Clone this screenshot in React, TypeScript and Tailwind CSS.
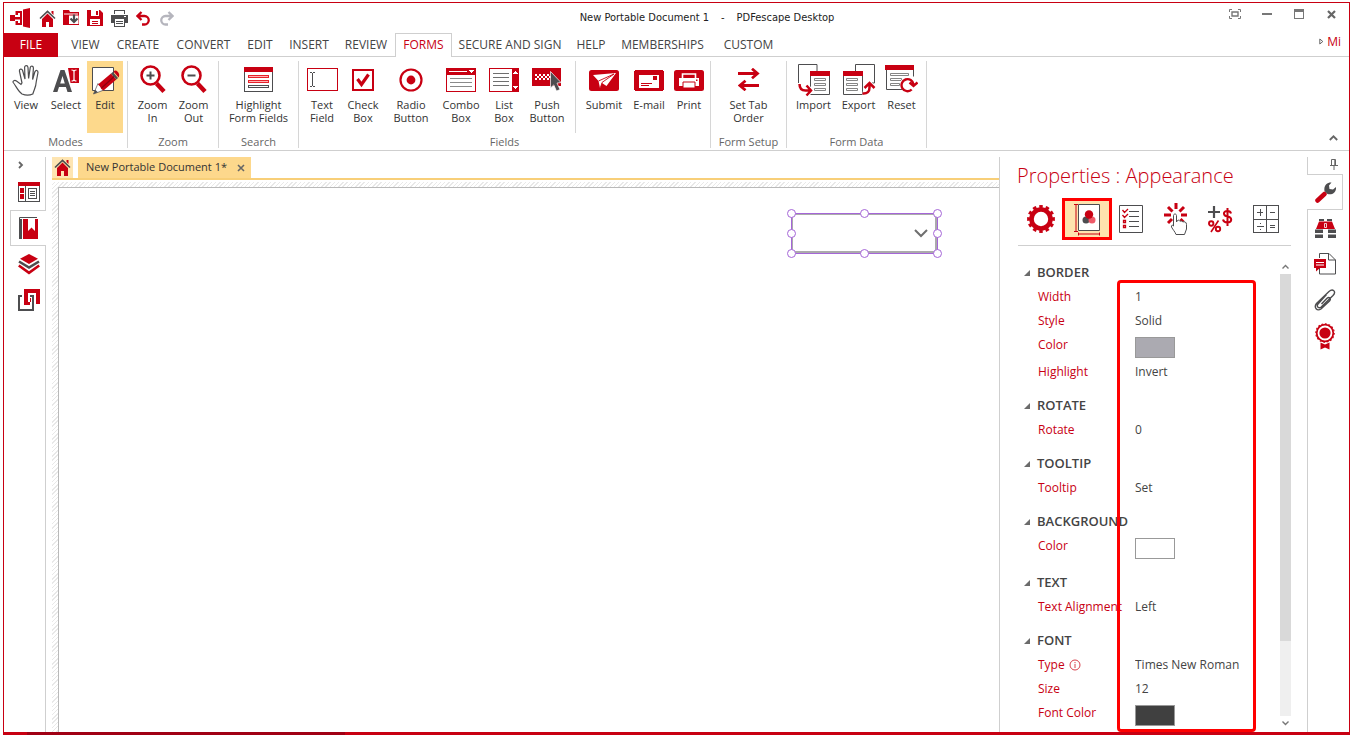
import React from "react";

const RED = "#c80012";
const DARK = "#4d4d4f";

type IconProps = { w: number; h: number; children: React.ReactNode; crisp?: boolean };

function Icon({ w, h, children, crisp }: IconProps) {
  return (
    <svg
      width={w}
      height={h}
      viewBox={`0 0 ${w} ${h}`}
      fill="none"
      aria-hidden="true"
      className="shrink-0"
      shapeRendering={crisp ? "crispEdges" : "auto"}
    >
      {children}
    </svg>
  );
}

/* ---------- title bar icons ---------- */

const ExitIcon = () => (
  <Icon w={21} h={20}>
    <path d="M13 1.500L20 0v20l-7-1.500z" fill={RED} />
    <path d="M0 7h5v6H0zM4 9h6v2.500H4z" fill={RED} />
    <path d="M5.500 3H12v14H5.500v-4H8v2h2V5H8v2H5.500z" fill={RED} />
  </Icon>
);

const HomeIcon = () => (
  <Icon w={17} h={17}>
    <path d="M3 9l5.500-5.500L14 9v8h-4v-5H7v5H3z" fill={RED} />
    <path d="M1 8.500l7.500-7.200L16 8.500" stroke={DARK} strokeWidth="1.600" />
    <path d="M12.500 1h2v4l-2-2z" fill={RED} />
  </Icon>
);

const FolderDownIcon = () => (
  <Icon w={17} h={16}>
    <path d="M0 0h6l1 2h9v13H0z" fill={RED} />
    <path d="M1 4h14" stroke="#fff" strokeWidth="1" />
    <path d="M6 5.500h9.500V14H6z" fill="#fff" />
    <path d="M11 4.500v7M7.500 8.500L11 12l3.500-3.500" stroke={DARK} strokeWidth="2.200" />
  </Icon>
);

const SaveIcon = () => (
  <Icon w={16} h={16}>
    <path d="M0 0h13l3 3v13H0z" fill={RED} />
    <path d="M4 0h8v6H4zM3 9h10v6H3z" fill="#fff" />
    <path d="M9 1h2v4H9zM5 11h6v1H5zM5 13h6v1H5z" fill={RED} />
  </Icon>
);

const PrinterIcon = () => (
  <Icon w={17} h={17} crisp>
    <path d="M3 0h11v4H3z" fill={DARK} />
    <path d="M4 1h9v3H4z" fill="#fff" />
    <path d="M0 5h17v8H0z" fill={DARK} />
    <path d="M3 9h11v8H3z" fill={DARK} />
    <path d="M4 9h9v7H4zM13 6h2v1h-2z" fill="#fff" />
    <path d="M5 11h7v1H5zM5 13h7v1H5z" fill={DARK} />
  </Icon>
);

const UndoIcon = ({ color }: { color: string }) => (
  <Icon w={14} h={15}>
    <path d="M5.500 1L1.500 5l4 4M2 5h6.500a3.900 3.900 0 010 8.500H6" stroke={color} strokeWidth="2.300" />
  </Icon>
);

const RedoIcon = ({ color }: { color: string }) => (
  <Icon w={14} h={15}>
    <path d="M8.500 1l4 4-4 4M12 5H5.500a3.900 3.900 0 000 8.500H8" stroke={color} strokeWidth="2.300" />
  </Icon>
);

/* ---------- ribbon icons ---------- */

const HandIcon = () => (
  <Icon w={28} h={32}>
    <path
      d="M10 30C6 27 4 22 1.200 18.500 .5 17 2.500 15.600 4.500 17L9 20.500l1-1.500L7.500 7.500C7 4.800 9.800 4.200 10.600 6.500L13 15 12.600 3.500c0-2.500 3.200-2.500 3.400 0l.6 11 1.600-10.700c.4-2.600 3.400-2.200 3.200.6L20.600 15.500 22.800 8c.8-2.600 3.600-1.600 3.100 1L24.200 18c-.2 5-1.700 6.500-3.400 12-3 1.400-7.500 1.400-10.800 0z"
      stroke={DARK}
      strokeWidth="1.200"
    />
  </Icon>
);

const SelectIcon = () => (
  <Icon w={27} h={26}>
    <path d="M15 1h11v15h-8.500z" fill={RED} />
    <path d="M0 25L7.500 3h4L19 25h-4.500l-1.600-5H6l-1.600 5zM7.200 16.500h4.600L9.500 9z" fill={DARK} fillRule="evenodd" />
    <path d="M18.500 3c2 0 2.500.5 2.500 1.500v8c0 1-.5 1.500-2.500 1.500M23.500 3c-2 0-2.500.5-2.500 1.500v8c0 1 .5 1.500 2.500 1.500" stroke="#fff" strokeWidth="1.200" />
  </Icon>
);

const EditIcon = () => (
  <Icon w={30} h={30}>
    <path d="M2.500 2.500h21v23h-21z" fill="#fff" stroke={DARK} />
    <path d="M3.500 29l4.500-10.500 6 6.500z" fill="#fff" stroke={DARK} strokeWidth=".7" />
    <path d="M3.500 29l1.800-4.200 2.500 2.500z" fill={DARK} />
    <path d="M8 19.500L21 8.500l5.300 6-12.800 11-2.200-1.500-1.300-2.500z" fill={RED} />
    <path d="M11.500 23L24 11.800" stroke="#8c0010" strokeWidth="1.200" />
    <path d="M21 8.500l1.800-1.500 5.300 6-1.800 1.500z" fill={DARK} />
    <path d="M23.500 6.400c1.600-1.600 3.300-.8 4.500.6s1.700 3.600.6 5.400z" fill={RED} />
  </Icon>
);

const ZoomIcon = ({ plus }: { plus?: boolean }) => (
  <Icon w={26} h={29}>
    <path d="M16.500 18.500l7.500 8" stroke={RED} strokeWidth="4.500" />
    <circle cx="10.500" cy="10.500" r="9" stroke={RED} strokeWidth="2.600" fill="#fff" />
    <path d={plus ? "M6.500 10.500h8M10.500 6.500v8" : "M6.500 10.500h8"} stroke={DARK} strokeWidth="2" />
  </Icon>
);

const HighlightIcon = () => (
  <Icon w={30} h={26} crisp>
    <path d="M.5 4.500h28v20H.5z" stroke={DARK} />
    <path d="M0 0h29v5H0z" fill={RED} />
    <path d="M4.500 8.500h20v2h-20zM4.500 13.500h20v2h-20z" fill="#ffb3b3" stroke="#e8202a" />
    <path d="M4.500 18.500h20v2h-20z" stroke={DARK} />
  </Icon>
);

const TextFieldIcon = () => (
  <Icon w={31} h={24} crisp>
    <path d="M.5 .5h30v22H.5z" fill="#fff" stroke={RED} />
    <path d="M3 4.500h2M6 4.500h2M5.500 5v13M3 18.500h2M6 18.500h2" stroke={DARK} />
  </Icon>
);

const CheckBoxIcon = () => (
  <Icon w={22} h={22}>
    <path d="M1 1h20v20H1z" fill="#fff" stroke={RED} strokeWidth="2" />
    <path d="M5.500 10l4 5.500 7-10" stroke={RED} strokeWidth="3.200" />
  </Icon>
);

const RadioIcon = () => (
  <Icon w={24} h={24}>
    <circle cx="12" cy="12" r="10.500" stroke={RED} strokeWidth="2.200" fill="#fff" />
    <circle cx="12" cy="12" r="4.400" fill={RED} />
  </Icon>
);

const ComboIcon = () => (
  <Icon w={30} h={24} crisp>
    <path d="M.5 .5h29v23H.5z" fill="#fff" stroke={RED} />
    <path d="M0 0h30v7H0z" fill={RED} />
    <path d="M3 3.500h18" stroke="#fff" />
    <path d="M23 2h5v1h-1v1h-1v1h-1V4h-1V3h-1z" fill="#fff" />
    <path d="M4 10.500h22M4 14.500h22M4 18.500h22" stroke="#8a8a8a" />
  </Icon>
);

const ListIcon = () => (
  <Icon w={30} h={24} crisp>
    <path d="M.5 .5h29v23H.5z" fill="#fff" stroke={RED} />
    <path d="M23 0h7v24h-7z" fill={RED} />
    <path d="M24 5h1V4h1V3h1v1h1v1h1v1h-5zM24 18h5v1h-1v1h-1v1h-1v-1h-1v-1h-1z" fill="#fff" />
    <path d="M4 5.500h16M4 9.500h16M4 13.500h16M4 17.500h16" stroke="#6f6f6f" />
  </Icon>
);

const PushIcon = () => (
  <Icon w={30} h={26}>
    <path d="M0 1h29v18H0z" fill={RED} />
    <path d="M3 8h15M5 10h15M3 12h15" stroke="#fff" strokeWidth="2" strokeDasharray="2 2" />
    <path d="M18.500 4.500l10.500 11-4 .6 3 6.400-3.500 1.600-2.700-6.200-3.300 3z" fill={DARK} stroke="#fff" strokeWidth=".7" />
  </Icon>
);

const SubmitIcon = () => (
  <Icon w={30} h={23}>
    <rect y="2" width="30" height="21" rx="2.500" fill={RED} />
    <path d="M4 7l23-2-9.500 13-4.500-3-2 5-1.500-7z" fill="#fff" />
    <path d="M9.500 13L25 6 13 14.500l-1.500 5" stroke={RED} strokeWidth=".9" />
  </Icon>
);

const EmailIcon = () => (
  <Icon w={30} h={23} crisp>
    <rect y="2" width="30" height="21" rx="2.500" fill={RED} />
    <path d="M5 7h20v13H5z" fill="#fff" />
    <path d="M19 8h4v4h-4zM7 15h11v1H7zM7 17h8v1H7z" fill={RED} />
  </Icon>
);

const PrintIcon = () => (
  <Icon w={30} h={23}>
    <rect y="2" width="30" height="21" rx="2.500" fill={RED} />
    <path d="M8.500 10V6h13v4" stroke="#fff" strokeWidth="1.600" />
    <path d="M5 10h20v8H5z" fill="#fff" />
    <path d="M9 14h12v6H9z" fill="#fff" stroke={RED} />
    <path d="M22 11.500h1.500V13H22z" fill={RED} />
  </Icon>
);

const TabOrderIcon = () => (
  <Icon w={22} h={23}>
    <path d="M0 5.500h19M14 .8l5.500 4.700L14 10.200M21 17.500H2M7.500 12.800L2 17.500l5.500 4.700" stroke={RED} strokeWidth="2.800" />
  </Icon>
);

const ImportIcon = () => (
  <Icon w={34} h={34}>
    <path d="M4 20.500H1.500V1.500H20V8" stroke={DARK} />
    <path d="M13.500 12.500h19v19h-19z" fill="#fff" stroke={DARK} />
    <path d="M13 8h20v5H13z" fill={RED} />
    <path d="M17.500 15.500h11v2h-11zM17.500 20.500h11v2h-11zM17.500 25.500h11v2h-11z" stroke="#777" strokeWidth=".9" />
    <path d="M2.500 20c0 5 2 7.500 6.500 7.500h4M9.500 22.500l5 5-5 5" stroke="#fff" strokeWidth="4" />
    <path d="M2.500 21c0 4.500 2 6.500 6 6.500h5M9.500 22.500l4.500 5-4.500 5" stroke={RED} strokeWidth="2.500" />
  </Icon>
);

const ExportIcon = () => (
  <Icon w={34} h={34}>
    <path d="M13.500 8V1.500h19V20H30" stroke={DARK} />
    <path d="M1.500 12.500h19v19h-19z" fill="#fff" stroke={DARK} />
    <path d="M1 8h20v5H1z" fill={RED} />
    <path d="M4.500 15.500h11v2h-11zM4.500 20.500h11v2h-11zM4.500 25.500h11v2h-11z" stroke="#777" strokeWidth=".9" />
    <path d="M20.500 30.500c5 .5 7-2 7-6V21M22.500 25l5-5 5 5" stroke="#fff" strokeWidth="4" />
    <path d="M20.500 30.500c5 .5 7-2 7-6V21M22.500 25l5-5 5 5" stroke={RED} strokeWidth="2.500" />
  </Icon>
);

const ResetIcon = () => (
  <Icon w={33} h={29}>
    <path d="M1.500 4.500h27v20h-27z" fill="#fff" stroke={DARK} />
    <path d="M0 0h29v5H0z" fill={RED} />
    <path d="M5.500 8.500h18v2h-18zM5.500 13.500h11v2h-11zM5.500 18.500h9v2h-9z" stroke="#777" strokeWidth=".9" />
    <path d="M15 19a8 8 0 018-7.500h6.500v16H18z" fill="#fff" />
    <path d="M28.500 19.500a6 6 0 10-1.800 5M24.500 17.500l4 3.500 4-3.500" stroke={RED} strokeWidth="2.400" />
  </Icon>
);

/* ---------- side rail icons ---------- */

const PagesIcon = () => (
  <Icon w={22} h={20} crisp>
    <path d="M.5 3.500h21v16H.5z" fill="#fff" stroke={DARK} />
    <path d="M0 0h22v4H0zM2 6h4v5H2zM2 12h4v5H2z" fill={RED} />
    <path d="M7.500 4v15M10.500 6.500h8v10h-8zM12 9.500h5M12 11.500h5M12 13.500h5" stroke={DARK} />
  </Icon>
);

const BookmarkIcon = () => (
  <Icon w={19} h={22}>
    <path d="M.5 22V.5H18" stroke={DARK} />
    <path d="M0 2h3v20H0z" fill={DARK} />
    <path d="M4 2h15v20H4z" fill={RED} />
    <path d="M9 2h7v12l-3.500-3.500L9 14z" fill="#fff" />
  </Icon>
);

const LayersIcon = () => (
  <Icon w={22} h={21}>
    <path d="M11 0l9 4.700-9 5.300L2 4.700z" fill={RED} />
    <path d="M1 7.500l10 6 10-6" stroke={DARK} strokeWidth="2.600" />
    <path d="M.8 11.500L11 18.800l10.200-7.300" stroke={RED} strokeWidth="2.600" />
  </Icon>
);

const CompareIcon = () => (
  <Icon w={22} h={22} crisp>
    <path d="M4 7H1v14h14V7h-3" stroke={DARK} strokeWidth="2" />
    <path d="M6 0h16v15h-4V4h-8v9h3v-4h-1v7H6z" fill={RED} />
  </Icon>
);

const WrenchIcon = () => (
  <Icon w={21} h={21}>
    <path d="M2.500 18.500L9.500 12" stroke={RED} strokeWidth="4.500" strokeLinecap="round" />
    <path d="M9.500 9C8.500 3.500 12 .2 16.500 .5L14 3.500l.5 3.500 3.500.5L21 5c.5 5-3.500 8.500-8.500 7z" fill={DARK} />
  </Icon>
);

const BinocularsIcon = () => (
  <Icon w={21} h={19}>
    <path d="M4 0h5v2H4zM12 0h5v2h-5zM0 10.500h8V14H0zM13 10.500h8V14h-8zM0 15.500h8V19H0zM13 15.500h8V19h-8z" fill={DARK} />
    <path d="M4 2.500h13l3 7.500H1z" fill={RED} />
    <path d="M9.500 4.500h2v4h-2z" stroke="#fff" strokeWidth=".8" />
  </Icon>
);

const CommentPageIcon = () => (
  <Icon w={22} h={22}>
    <path d="M5.500 5V.5h9.500l6.500 6.500v14h-16v-6" stroke={DARK} />
    <path d="M14.500 .5V7h7" stroke={DARK} />
    <path d="M0 6h12v9H6l-4 3.500V15H0z" fill={RED} />
    <path d="M2 9.500h8M2 12h8" stroke="#fff" />
  </Icon>
);

const ClipIcon = () => (
  <Icon w={22} h={22}>
    <path
      d="M12.500 5.500L4 15c-2 2.500 1 5 3.200 3L19 6.500C23 2 18.500-.5 15 2.500L2.500 14.500C-.5 18.500 3 22.500 7 20l8.500-8c2-2.200-.2-4.500-2.500-2.800L7.500 15"
      stroke={DARK}
      strokeWidth="1.400"
    />
  </Icon>
);

const SealIcon = () => (
  <Icon w={20} h={27}>
    <circle cx="10" cy="10" r="8.300" stroke={RED} strokeWidth="1.800" fill="#fff" />
    <circle cx="10" cy="10" r="9.200" stroke={RED} strokeWidth="1.200" pathLength={32} strokeDasharray="1 1" />
    <circle cx="10" cy="10" r="5.600" fill={RED} />
    <path d="M5.500 19.500l4.500 2 4.500-2v7L10 24.500l-4.500 2z" fill={RED} />
  </Icon>
);

/* ---------- property category icons ---------- */

const GearIcon = () => (
  <Icon w={28} h={28}>
    <circle cx="14" cy="14" r="9.500" stroke={RED} strokeWidth="4.600" />
    <circle cx="14" cy="14" r="12.400" stroke={RED} strokeWidth="3" pathLength={24} strokeDasharray="1.100 0.900" strokeDashoffset="0.550" />
  </Icon>
);

const AppearanceIcon = () => (
  <Icon w={26} h={33}>
    <path d="M0 1.500h4M2 1v28M0 28.500h4M5 31h21M4.500 29.500v3M25.500 29.500v3" stroke={RED} />
    <path d="M4.500 1.500h21v26h-21z" fill="#fff" stroke={DARK} />
    <circle cx="12" cy="17" r="3.500" fill={DARK} />
    <circle cx="18" cy="17" r="3.500" fill="#ee5a68" />
    <circle cx="15" cy="11.500" r="4.200" fill={RED} />
  </Icon>
);

const ChecklistIcon = () => (
  <Icon w={24} h={28}>
    <path d="M.5 .5h23v27H.5z" fill="#fff" stroke={DARK} />
    <path d="M10 6.500h10M10 11.500h10M10 16.500h10M10 21.500h10" stroke={DARK} />
    <path d="M3.500 5l2 2.500L9 4M3.500 10l2 2.500L9 9M4.500 15.500h2v2h-2zM4.500 20.500h2v2h-2z" stroke={RED} strokeWidth="1.300" />
  </Icon>
);

const ClickIcon = () => (
  <Icon w={24} h={32}>
    <path
      d="M12 0v6M4 4l4.500 4.500M20 4l-4.500 4.500M0 12h7M23 12h-6M4 20l4-4M19.500 19l-3-3"
      stroke={RED}
      strokeWidth="3"
    />
    <path
      d="M9.500 23V12.500c0-2 3-2 3 0V19l1-1.500c1-.8 2 0 2.500.8 1-.8 2.200-.3 2.800.7 1.500-.8 3.700 0 3.700 2.500V26l-2 5.500H12c-1-3-3-4.500-4.500-7.500-.5-2 1-2.300 2-1z"
      fill="#fff"
      stroke={DARK}
    />
  </Icon>
);

const FormatIcon = () => (
  <Icon w={25} h={28}>
    <path d="M0 7h12M6 1v12" stroke={DARK} strokeWidth="2.200" />
    <circle cx="3.200" cy="18.500" r="2.200" stroke={RED} strokeWidth="1.900" />
    <circle cx="10" cy="24" r="2.200" stroke={RED} strokeWidth="1.900" />
    <path d="M10.500 15.500L3 27" stroke={RED} strokeWidth="1.600" />
    <path d="M23 8.500c-.5-2-2-2.500-3.500-2.500-5 0-4.500 4.800 0 5.500 5 .8 5 6-.2 6-2.500 0-3.800-1-4.300-3M19.500 3v18" stroke={RED} strokeWidth="2" />
  </Icon>
);

const CalcIcon = () => (
  <Icon w={26} h={28} crisp>
    <path d="M.5 .5h25v27H.5zM.5 14.500h25M13.500 .5v27" stroke={DARK} />
    <path d="M4 7.500h6M7.500 4v7M17 7.500h5M4 21.500h7M17 20.500h5M17 22.500h5" stroke={DARK} />
    <path d="M7 18h1v1H7zM7 24h1v1H7z" fill={DARK} />
  </Icon>
);

/* ---------- ribbon ---------- */

type Command = { label: string; icon: React.ReactNode; cls: string; on?: boolean };

function RibbonButton({ label, icon, cls, on }: Command) {
  return (
    <button
      className={`flex h-[72px] shrink-0 flex-col items-center ${cls} ${on ? "bg-[#fdd98c]" : ""}`}
      aria-pressed={on}
    >
      <span className="flex h-[37px] items-center justify-center">{icon}</span>
      <span className="text-[11px] leading-[13px] whitespace-pre text-[#333]">{label}</span>
    </button>
  );
}

function RibbonGroup({ name, cls, children }: { name: string; cls: string; children: React.ReactNode }) {
  return (
    <section aria-label={name} className={`flex shrink-0 flex-col border-r border-[#d6d6d6] ${cls}`}>
      <div className="flex h-[72px] justify-center">{children}</div>
      <div className="text-center text-[11px] leading-[18px] text-[#666]">{name}</div>
    </section>
  );
}

const TABS: { name: string; cls: string }[] = [
  { name: "VIEW", cls: "w-[45px]" },
  { name: "CREATE", cls: "w-[60px]" },
  { name: "CONVERT", cls: "w-[71px]" },
  { name: "EDIT", cls: "w-[42px]" },
  { name: "INSERT", cls: "w-[56px]" },
  { name: "REVIEW", cls: "w-[58px]" },
  { name: "FORMS", cls: "w-[57px]" },
  { name: "SECURE AND SIGN", cls: "w-[116px]" },
  { name: "HELP", cls: "w-[46px]" },
  { name: "MEMBERSHIPS", cls: "w-[97px]" },
  { name: "CUSTOM", cls: "w-[75px]" },
];

function Ribbon() {
  return (
    <div className="flex h-[94px] shrink-0 border-b border-[#cfcfcf] pt-1 pb-0.5">
      <RibbonGroup name="Modes" cls="w-[124px]">
        <RibbonButton label="View" icon={<HandIcon />} cls="w-10" />
        <RibbonButton label="Select" icon={<SelectIcon />} cls="w-10" />
        <RibbonButton label="Edit" icon={<EditIcon />} cls="mr-0.5 ml-px w-9" on />
      </RibbonGroup>
      <RibbonGroup name="Zoom" cls="w-[91px]">
        <RibbonButton label={"Zoom\nIn"} icon={<ZoomIcon plus />} cls="w-[41px]" />
        <RibbonButton label={"Zoom\nOut"} icon={<ZoomIcon />} cls="w-[41px]" />
      </RibbonGroup>
      <RibbonGroup name="Search" cls="w-20">
        <RibbonButton label={"Highlight\nForm Fields"} icon={<HighlightIcon />} cls="w-[76px]" />
      </RibbonGroup>
      <RibbonGroup name="Fields" cls="w-[412px]">
        <RibbonButton label={"Text\nField"} icon={<TextFieldIcon />} cls="w-[42px]" />
        <RibbonButton label={"Check\nBox"} icon={<CheckBoxIcon />} cls="w-10" />
        <RibbonButton label={"Radio\nButton"} icon={<RadioIcon />} cls="w-14" />
        <RibbonButton label={"Combo\nBox"} icon={<ComboIcon />} cls="w-11" />
        <RibbonButton label={"List\nBox"} icon={<ListIcon />} cls="w-[42px]" />
        <RibbonButton label={"Push\nButton"} icon={<PushIcon />} cls="w-11" />
        <span className="mr-1 ml-1.5 h-full w-px bg-[#d6d6d6]" />
        <RibbonButton label="Submit" icon={<SubmitIcon />} cls="w-12" />
        <RibbonButton label="E-mail" icon={<EmailIcon />} cls="w-[42px]" />
        <RibbonButton label="Print" icon={<PrintIcon />} cls="w-[38px]" />
      </RibbonGroup>
      <RibbonGroup name="Form Setup" cls="w-[76px]">
        <RibbonButton label={"Set Tab\nOrder"} icon={<TabOrderIcon />} cls="w-[72px]" />
      </RibbonGroup>
      <RibbonGroup name="Form Data" cls="w-[140px]">
        <RibbonButton label="Import" icon={<ImportIcon />} cls="w-[46px]" />
        <RibbonButton label="Export" icon={<ExportIcon />} cls="w-[44px]" />
        <RibbonButton label="Reset" icon={<ResetIcon />} cls="w-[42px]" />
      </RibbonGroup>
      <button aria-label="Collapse ribbon" className="mt-auto mr-2 mb-0.5 ml-auto flex size-4 items-center justify-center">
        <Icon w={9} h={6}>
          <path d="M.8 5l3.700-3.700L8.200 5" stroke="#666" strokeWidth="1.800" />
        </Icon>
      </button>
    </div>
  );
}

/* ---------- property panel ---------- */

function Row({ id, label, tall, info, children }: { id: string; label: string; tall?: boolean; info?: boolean; children: React.ReactNode }) {
  return (
    <div className={`flex items-start pl-[38px] ${tall ? "h-[27px]" : "h-6"}`}>
      <label htmlFor={id} className="flex w-[97px] shrink-0 items-center gap-1 text-xs leading-6 whitespace-nowrap text-[#c80012]">
        {label}
        {info && (
          <Icon w={12} h={12}>
            <circle cx="6" cy="6" r="5" stroke="#d8404c" />
            <path d="M6 5v4M6 3v1.200" stroke="#d8404c" />
          </Icon>
        )}
      </label>
      {children}
    </div>
  );
}

function TextValue({ id, value }: { id: string; value: string }) {
  return <input id={id} defaultValue={value} className="h-[23px] w-28 bg-transparent p-0 text-xs text-[#444] outline-none" />;
}

function Choice({ id, options }: { id: string; options: string[] }) {
  return (
    <select id={id} className="h-6 w-28 appearance-none bg-transparent p-0 text-xs text-[#444] outline-none">
      {options.map((o) => (
        <option key={o}>{o}</option>
      ))}
    </select>
  );
}

function Swatch({ id, cls, name }: { id: string; cls: string; name: string }) {
  return <button id={id} aria-label={name} className={`mt-1 h-[21px] w-10 border border-[#999] ${cls}`} />;
}

function Section({ title, children }: { title: string; children: React.ReactNode }) {
  return (
    <section className="mb-[9px]">
      <h3 className="h-[25px]">
        <button className="flex h-full items-center gap-[7px] pl-6 text-[13px] font-semibold text-[#444]">
          <Icon w={6} h={6}>
            <path d="M6 0v6H0z" fill="#6b6b6b" />
          </Icon>
          {title}
        </button>
      </h3>
      {children}
    </section>
  );
}

function PropertiesPanel() {
  const categories = [
    { name: "General", icon: <GearIcon /> },
    { name: "Appearance", icon: <AppearanceIcon /> },
    { name: "Options", icon: <ChecklistIcon /> },
    { name: "Actions", icon: <ClickIcon /> },
    { name: "Format", icon: <FormatIcon /> },
    { name: "Calculate", icon: <CalcIcon /> },
  ];
  return (
    <aside className="relative mt-1.5 flex w-[308px] shrink-0 flex-col border-l border-[#cfcfcf]">
      <h2 className="h-[41px] pl-[17px] text-xl leading-[38px] font-light text-[#c80012]">Properties : Appearance</h2>
      <div className="mr-4 ml-[18px] flex h-12 shrink-0 border-b border-[#cfcfcf]">
        {categories.map((c) =>
          c.name === "Appearance" ? (
            <button
              key={c.name}
              aria-label={c.name}
              aria-pressed="true"
              className="-mr-[4px] -ml-[1px] flex h-[42px] w-[50px] items-center justify-center border-[3px] border-[#f00] bg-[#fee3ae]"
            >
              {c.icon}
            </button>
          ) : (
            <button key={c.name} aria-label={c.name} className="flex h-[42px] w-[45px] items-center justify-center">
              {c.icon}
            </button>
          ),
        )}
      </div>
      <div className="flex min-h-0 flex-1 overflow-hidden pt-3.5">
        <div className="min-w-0 flex-1 overflow-hidden">
          <Section title="BORDER">
            <Row id="bw" label="Width"><TextValue id="bw" value="1" /></Row>
            <Row id="bs" label="Style"><Choice id="bs" options={["Solid"]} /></Row>
            <Row id="bc" label="Color" tall><Swatch id="bc" name="Border color" cls="bg-[#abaab1]" /></Row>
            <Row id="bh" label="Highlight"><Choice id="bh" options={["Invert"]} /></Row>
          </Section>
          <Section title="ROTATE">
            <Row id="ro" label="Rotate"><TextValue id="ro" value="0" /></Row>
          </Section>
          <Section title="TOOLTIP">
            <Row id="tt" label="Tooltip"><button id="tt" className="text-xs leading-6 text-[#444]">Set</button></Row>
          </Section>
          <Section title="BACKGROUND">
            <Row id="bg" label="Color" tall><Swatch id="bg" name="Background color" cls="bg-white" /></Row>
          </Section>
          <Section title="TEXT">
            <Row id="ta" label="Text Alignment"><Choice id="ta" options={["Left"]} /></Row>
          </Section>
          <Section title="FONT">
            <Row id="ft" label="Type" info><Choice id="ft" options={["Times New Roman"]} /></Row>
            <Row id="fs" label="Size"><TextValue id="fs" value="12" /></Row>
            <Row id="fc" label="Font Color" tall><Swatch id="fc" name="Font color" cls="bg-[#404040]" /></Row>
          </Section>
        </div>
        <div className="mr-4 flex w-[11px] flex-col items-center pt-1 pb-1.5">
          <Icon w={7} h={5}>
            <path d="M.5 4.500l3-3 3 3" stroke="#777" strokeWidth="1.400" />
          </Icon>
          <div className="my-[5px] w-full flex-1 bg-[#efefef]">
            <div className="h-[83%] w-full bg-[#d9d9d9]" />
          </div>
          <Icon w={7} h={5}>
            <path d="M.5 .5l3 3 3-3" stroke="#777" strokeWidth="1.400" />
          </Icon>
        </div>
      </div>
      <div className="pointer-events-none absolute top-[123px] bottom-0 left-[117px] w-[139px] rounded-sm border-[3px] border-[#f00]" />
    </aside>
  );
}

/* ---------- page canvas ---------- */

function FormField() {
  const handles = [
    "-top-[5px] -left-[5px]",
    "-top-[5px] left-[68px]",
    "-top-[5px] -right-[5px]",
    "top-[15px] -left-[5px]",
    "top-[15px] -right-[5px]",
    "-bottom-[5px] -left-[5px]",
    "-bottom-[5px] left-[68px]",
    "-right-[5px] -bottom-[5px]",
  ];
  return (
    <div className="absolute top-[25px] left-[732px] h-[41px] w-[147px] border border-[#a566d8]">
      <div className="flex h-full items-center justify-end border-t border-r-2 border-b-2 border-l border-[#ababab] pr-[7px]">
        <Icon w={14} h={9}>
          <path d="M1 1l6 6 6-6" stroke="#6f6f6f" strokeWidth="2" />
        </Icon>
      </div>
      {handles.map((h) => (
        <span key={h} className={`absolute size-[9px] rounded-full border border-[#a566d8] bg-white ${h}`} />
      ))}
    </div>
  );
}

function Workspace() {
  return (
    <main className="mt-1.5 ml-1.5 flex min-w-0 flex-1 flex-col">
      <div className="flex h-[23px] shrink-0 gap-[5px] border-b-2 border-[#f8cf78]">
        <button aria-label="Home" className="flex w-[21px] items-center justify-center bg-[#fee5b2]">
          <HomeIcon />
        </button>
        <div className="flex items-center gap-2 bg-[#fdd88c] pr-1 pl-2 text-[11px] text-[#333]">
          <span className="whitespace-nowrap">New Portable Document 1*</span>
          <button aria-label="Close document" className="flex size-3 items-center justify-center">
            <Icon w={8} h={8}>
              <path d="M1 1l6 6M7 1L1 7" stroke="#666" strokeWidth="1.600" />
            </Icon>
          </button>
        </div>
      </div>
      <div className="mt-0.5 flex min-h-0 flex-1 bg-[repeating-linear-gradient(-45deg,#e8e8e8_0px,#e8e8e8_1px,#ffffff_1px,#ffffff_3px)] pt-[5px] pl-1.5">
        <div className="relative min-w-0 flex-1 overflow-hidden border-t border-l border-[#b9b9b9] bg-white">
          <FormField />
        </div>
      </div>
    </main>
  );
}

function LeftRail() {
  return (
    <nav aria-label="Navigation panes" className="mt-1.5 flex w-[42px] shrink-0 flex-col">
      <div className="flex h-[53px] flex-col border-r border-[#cfcfcf]">
        <button aria-label="Expand" className="ml-[14px] flex h-4 w-2 items-center">
          <Icon w={6} h={8}>
            <path d="M1 1l3 3-3 3" stroke="#666" strokeWidth="1.800" />
          </Icon>
        </button>
        <button aria-label="Pages" className="mt-[9px] ml-[14px]"><PagesIcon /></button>
      </div>
      <button aria-label="Bookmarks" className="ml-1.5 flex h-9 items-center border-y border-l border-[#cfcfcf] pl-2"><BookmarkIcon /></button>
      <div className="flex flex-1 flex-col border-r border-[#cfcfcf] pl-[14px]">
        <button aria-label="Layers" className="flex h-9 items-center"><LayersIcon /></button>
        <button aria-label="Compare" className="flex h-9 items-center"><CompareIcon /></button>
      </div>
    </nav>
  );
}

function RightRail() {
  return (
    <nav aria-label="Tool panes" className="mt-1.5 flex w-[42px] shrink-0 flex-col pr-1.5">
      <div className="-mr-1 flex h-[17px] items-center justify-end border-l border-[#cfcfcf] pr-[9px] pb-0.5">
        <button aria-label="Pin">
          <Icon w={8} h={11}>
            <path d="M1.500 6V.5h4V6M0 6.500h8M4 7v4M4.800 1v5" stroke="#666" />
          </Icon>
        </button>
      </div>
      <button aria-label="Properties" className="flex h-9 items-center justify-center border-y border-r border-[#cfcfcf] pl-0.5"><WrenchIcon /></button>
      <div className="flex flex-1 flex-col border-l border-[#cfcfcf] pr-px">
        <button aria-label="Search" className="flex h-9 items-center justify-center"><BinocularsIcon /></button>
        <button aria-label="Comments" className="flex h-9 items-center justify-center"><CommentPageIcon /></button>
        <button aria-label="Attachments" className="flex h-9 items-center justify-center"><ClipIcon /></button>
        <button aria-label="Signatures" className="flex h-9 items-center justify-center"><SealIcon /></button>
      </div>
    </nav>
  );
}

function TitleBar() {
  const quick = [
    { name: "Home", icon: <HomeIcon /> },
    { name: "Open", icon: <FolderDownIcon /> },
    { name: "Save", icon: <SaveIcon /> },
    { name: "Print", icon: <PrinterIcon /> },
    { name: "Undo", icon: <UndoIcon color={RED} /> },
    { name: "Redo", icon: <RedoIcon color="#b5b5bd" /> },
  ];
  const windowButtons = [
    {
      name: "Full screen",
      icon: (
        <Icon w={12} h={10}>
          <path d="M.5 3V.5H3M9 .5h2.500V3M.5 7v2.500H3M9 9.500h2.500V7" stroke="#777" />
          <path d="M3 3h6v4H3z" stroke="#777" strokeWidth="1.400" />
        </Icon>
      ),
    },
    { name: "Minimize", icon: <Icon w={10} h={2} crisp><path d="M0 0h10v2H0z" fill="#777" /></Icon> },
    {
      name: "Maximize",
      icon: (
        <Icon w={10} h={10} crisp>
          <path d="M.5 .5h9v9h-9z" stroke="#777" />
          <path d="M0 0h10v3H0z" fill="#777" />
        </Icon>
      ),
    },
    { name: "Close", icon: <Icon w={9} h={9}><path d="M1 1l7 7M8 1L1 8" stroke="#666" strokeWidth="2.200" /></Icon> },
  ];
  return (
    <header className="flex h-[30px] shrink-0">
      <button aria-label="Exit" className="flex w-8 items-center justify-center"><ExitIcon /></button>
      <div className="flex pr-px">
        {quick.map((q) => (
          <button key={q.name} aria-label={q.name} className="flex w-6 items-center justify-center pr-0.5">{q.icon}</button>
        ))}
      </div>
      <h1 className="flex flex-1 justify-center gap-3 pl-3.5 text-[11px] leading-[29px] whitespace-nowrap text-[#222] [font-family:'DejaVu_Sans_Condensed','DejaVu_Sans',sans-serif]">
        <span>New Portable Document 1</span>
        <span>-</span>
        <span>PDFescape Desktop</span>
      </h1>
      <div className="mr-0.5 flex h-[22px]">
        {windowButtons.map((b) => (
          <button key={b.name} aria-label={b.name} className="flex w-8 items-center justify-center">{b.icon}</button>
        ))}
      </div>
    </header>
  );
}

export default function App() {
  return (
    <div className="flex h-screen min-w-[1200px] flex-col bg-white pt-0.5 pr-0.5 pl-[3px] [font-family:'Open_Sans','Noto_Sans',sans-serif]">
      <div className="flex min-h-0 flex-1 flex-col border-x border-t border-[#c80012]">
        <TitleBar />
        <nav aria-label="Ribbon tabs" className="flex h-6 shrink-0 text-xs text-[#444]">
          <button className="w-[54px] bg-[#c80012] text-white">FILE</button>
          <span className="w-[5px] border-b border-[#cfcfcf]" />
          {TABS.map((t) => (
            <button
              key={t.name}
              className={`shrink-0 whitespace-nowrap ${t.cls} ${
                t.name === "FORMS" ? "border-x border-t border-[#cfcfcf] pb-px text-[#c80012]" : "border-b border-[#cfcfcf]"
              }`}
            >
              {t.name}
            </button>
          ))}
          <button className="flex flex-1 items-center justify-end gap-[3px] border-b border-[#cfcfcf] pr-2 pb-1.5 text-[#c80012]">
            <Icon w={5} h={7}>
              <path d="M.8 1v5l3-2.500z" stroke="#555" strokeWidth=".9" />
            </Icon>
            Mi
          </button>
        </nav>
        <Ribbon />
        <div className="flex min-h-0 flex-1">
          <LeftRail />
          <Workspace />
          <PropertiesPanel />
          <RightRail />
        </div>
      </div>
      <div className="h-[3px] shrink-0 bg-[#c80012] pl-6">
        <div className="h-full w-[318px] bg-[#a00014]" />
      </div>
    </div>
  );
}
